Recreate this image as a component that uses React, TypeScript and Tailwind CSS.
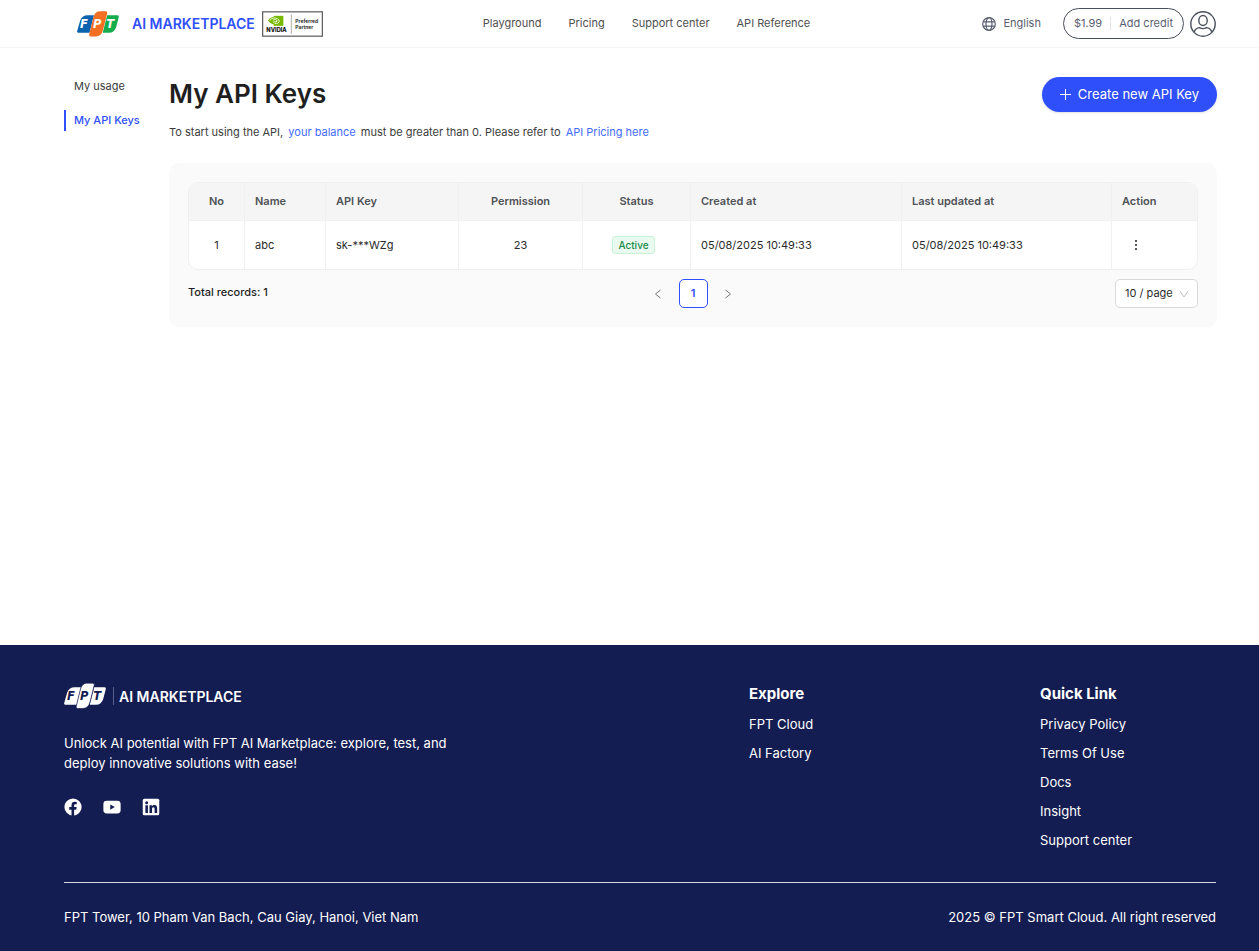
import React from 'react';

const navLinks = ['Playground', 'Pricing', 'Support center', 'API Reference'];
const exploreLinks = ['FPT Cloud', 'AI Factory'];
const quickLinks = ['Privacy Policy', 'Terms Of Use', 'Docs', 'Insight', 'Support center'];

const columns = [
  { title: 'No', width: 'w-[56px]', align: 'text-center' },
  { title: 'Name', width: 'w-[81px]', align: 'text-left' },
  { title: 'API Key', width: 'w-[133px]', align: 'text-left' },
  { title: 'Permission', width: 'w-[124px]', align: 'text-center' },
  { title: 'Status', width: 'w-[108px]', align: 'text-center' },
  { title: 'Created at', width: 'w-[211px]', align: 'text-left' },
  { title: 'Last updated at', width: 'w-[210px]', align: 'text-left' },
  { title: 'Action', width: 'w-[86px]', align: 'text-left' },
];

function FptLogo({ mono = false }: { mono?: boolean }) {
  const colors = mono ? ['#fff', '#fff', '#fff'] : ['#0b62ae', '#f36f21', '#14ad4e'];
  const ink = mono ? '#141d52' : '#fff';
  return (
    <svg viewBox="0 0 124 76" className="h-[26px] w-[42px]" role="img" aria-label="FPT">
      <path d="M32 12H50L37 64H4Q-1 64 1 57L9 29Q14 12 32 12Z" fill={colors[0]} />
      <path d="M89 12H119Q125 12 123 19L116 46Q111 64 94 64H76Z" fill={colors[2]} />
      <path
        d="M66 0H85Q91 0 89 7L77 55Q72 75 55 75H40Q35 75 36 69L48 20Q53 0 66 0Z"
        fill={colors[1]}
        stroke={mono ? '#141d52' : 'none'}
        strokeWidth="2"
      />
      <g fill={ink} fontFamily="'DejaVu Sans', sans-serif" fontWeight="700" fontStyle="italic" fontSize="34">
        <text x="9" y="51">F</text>
        <text x="47" y="51">P</text>
        <text x="86" y="51">T</text>
      </g>
    </svg>
  );
}

function NvidiaBadge() {
  return (
    <svg viewBox="0 0 183 77" className="h-[26px] w-[61px]" role="img" aria-label="NVIDIA Preferred Partner">
      <rect x="2" y="2" width="179" height="73" fill="#fff" stroke="#555" strokeWidth="3.5" />
      <rect x="35" y="14" width="29" height="30" fill="#76b900" />
      <path d="M18 28Q26 17 38 17V40Q24 38 18 28Z" fill="#76b900" />
      <path d="M23 28Q33 16 47 23Q57 30 47 36Q37 40 33 31" fill="none" stroke="#fff" strokeWidth="2.5" />
      <path d="M33 27Q40 22 46 29Q42 35 37 31" fill="none" stroke="#fff" strokeWidth="2.5" />
      <path d="M88 10V68" stroke="#888" strokeWidth="2" />
      <g fill="#111" fontFamily="Inter, sans-serif">
        <text x="13" y="63" fontSize="17" fontWeight="800">NVIDIA</text>
        <text x="100" y="37" fontSize="15" fontWeight="600">Preferred</text>
        <text x="100" y="53" fontSize="15" fontWeight="600">Partner</text>
      </g>
    </svg>
  );
}

function Globe() {
  return (
    <svg viewBox="0 0 14 14" className="size-[14px]" fill="none" stroke="currentColor" strokeWidth="1.2" aria-hidden="true">
      <circle cx="7" cy="7" r="6.3" />
      <ellipse cx="7" cy="7" rx="3" ry="6.3" />
      <path d="M1.2 4.8H12.8M1.2 9.2H12.8" />
    </svg>
  );
}

function Avatar() {
  return (
    <svg viewBox="0 0 26 26" className="size-[26px]" fill="none" stroke="#4a4f5c" strokeWidth="1.4" aria-hidden="true">
      <circle cx="13" cy="13" r="12.2" />
      <ellipse cx="13" cy="9.5" rx="4.2" ry="5" />
      <path d="M4 21.5Q5.5 16.8 9.5 16.6Q13 18.6 16.5 16.6Q20.5 16.8 22 21.5" />
    </svg>
  );
}

function Header() {
  return (
    <header className="grid h-12 grid-cols-[1fr_auto_1fr] items-center border-b border-[#f5f5f5] pr-[43px] pl-[77px]">
      <a href="#" className="flex items-center">
        <FptLogo />
        <span className="ml-[13px] text-[14px] font-semibold text-[#2f4ffb]">AI MARKETPLACE</span>
        <span className="ml-[7px]">
          <NvidiaBadge />
        </span>
      </a>
      <nav className="flex gap-[27px] text-[11px] text-[#4f4f4f]">
        {navLinks.map((label) => (
          <a key={label} href="#">
            {label}
          </a>
        ))}
      </nav>
      <div className="flex items-center justify-end text-[11px] text-[#5b6070]">
        <button type="button" className="flex items-center gap-[7px]">
          <Globe />
          English
        </button>
        <div className="ml-[22px] flex h-[31px] items-center rounded-full border border-[#4a4f5c] px-[10px]">
          <span>$1.99</span>
          <span className="mx-2 h-[13px] w-px bg-[#e5e5e5]" />
          <a href="#">Add credit</a>
        </div>
        <button type="button" aria-label="Account" className="ml-[6px]">
          <Avatar />
        </button>
      </div>
    </header>
  );
}

function Sidebar() {
  return (
    <nav className="flex w-[105px] shrink-0 flex-col gap-[13px] pt-[28px] text-[11px] leading-[21px]">
      <a href="#" className="border-l-2 border-transparent pl-2 text-[#3c3c3c]">
        My usage
      </a>
      <a href="#" aria-current="page" className="border-l-2 border-[#2f4ffb] pl-2 font-medium text-[#2f4ffb]">
        My API Keys
      </a>
    </nav>
  );
}

function KeysTable() {
  const cell = 'h-[48px] border-r border-[#f0f0f0] px-[10px] last:border-r-0';
  return (
    <div className="overflow-hidden rounded-[10px] border border-[#f0f0f0] bg-white">
      <table className="w-full table-fixed border-separate border-spacing-0 text-[11px] text-[#2b2b2b]">
        <thead className="bg-[#f5f5f5] text-[#4f5256]">
          <tr>
            {columns.map((c) => (
              <th
                key={c.title}
                scope="col"
                className={`${c.width} ${c.align} h-[38px] border-r border-b border-[#f0f0f0] px-[10px] font-semibold last:border-r-0`}
              >
                {c.title}
              </th>
            ))}
          </tr>
        </thead>
        <tbody>
          <tr>
            <td className={`${cell} text-center`}>1</td>
            <td className={cell}>abc</td>
            <td className={cell}>sk-***WZg</td>
            <td className={`${cell} text-center`}>23</td>
            <td className={`${cell} text-center`}>
              <span className="mr-[6px] inline-block rounded-[3px] border border-[#c9f2d6] bg-[#ebfaf0] px-[5px] text-[10px] leading-[16px] font-medium text-[#1a8a4a]">
                Active
              </span>
            </td>
            <td className={cell}>05/08/2025 10:49:33</td>
            <td className={cell}>05/08/2025 10:49:33</td>
            <td className={cell}>
              <button type="button" aria-label="More actions" className="flex h-6 w-7 items-center justify-center">
                <svg viewBox="0 0 4 12" className="h-3 w-1" fill="#222" aria-hidden="true">
                  <circle cx="2" cy="2" r="1" />
                  <circle cx="2" cy="6" r="1" />
                  <circle cx="2" cy="10" r="1" />
                </svg>
              </button>
            </td>
          </tr>
        </tbody>
      </table>
    </div>
  );
}

function Pager() {
  return (
    <div className="mt-[9px] grid grid-cols-[1fr_auto_1fr] text-[11px] text-[#1f1f1f]">
      <p className="leading-[26px] font-medium">Total records: 1</p>
      <div className="flex gap-[6px]">
        <button type="button" aria-label="Previous page" className="flex size-[29px] items-center justify-center text-[#777]">
          <svg viewBox="0 0 8 10" className="h-[10px] w-2" fill="none" stroke="currentColor" aria-hidden="true">
            <path d="M6.5 1L1.5 5L6.5 9" />
          </svg>
        </button>
        <button type="button" aria-current="page" className="size-[29px] rounded-[5px] border border-[#2f4ffb] bg-white font-semibold text-[#2f4ffb]">
          1
        </button>
        <button type="button" aria-label="Next page" className="flex size-[29px] items-center justify-center text-[#777]">
          <svg viewBox="0 0 8 10" className="h-[10px] w-2" fill="none" stroke="currentColor" aria-hidden="true">
            <path d="M1.5 1L6.5 5L1.5 9" />
          </svg>
        </button>
      </div>
      <div className="relative justify-self-end">
        <select
          aria-label="Rows per page"
          className="h-[29px] w-[83px] appearance-none rounded-[5px] border border-[#d9d9d9] bg-white pl-[9px] text-[11px] text-[#2b2b2b]"
        >
          <option>10 / page</option>
          <option>20 / page</option>
          <option>50 / page</option>
        </select>
        <svg
          viewBox="0 0 10 8"
          className="pointer-events-none absolute top-[11px] right-[9px] h-2 w-[10px]"
          fill="none"
          stroke="#bfbfbf"
          aria-hidden="true"
        >
          <path d="M1 1L5 7L9 1" />
        </svg>
      </div>
    </div>
  );
}

function FooterColumn({ title, links }: { title: string; links: string[] }) {
  return (
    <div>
      <h2 className="text-[15px] leading-[20px] font-bold">{title}</h2>
      <ul className="mt-[10px] flex flex-col gap-[9px] leading-[20px]">
        {links.map((l) => (
          <li key={l}>
            <a href="#">{l}</a>
          </li>
        ))}
      </ul>
    </div>
  );
}

function Footer() {
  return (
    <footer className="bg-[#141d52] pr-[43px] pl-16 text-[13px] text-white">
      <div className="grid grid-cols-[685fr_291fr_176fr] pt-[39px] pb-8">
        <div>
          <a href="#" className="flex h-6 items-center">
            <FptLogo mono />
            <span className="mr-[5px] ml-[7px] h-[18px] w-px bg-[#5a6189]" />
            <span className="text-[14px] font-semibold">AI MARKETPLACE</span>
          </a>
          <p className="mt-[25px] max-w-[400px] leading-[20px]">
            Unlock AI potential with FPT AI Marketplace: explore, test, and deploy innovative solutions with ease!
          </p>
          <div className="mt-[25px] flex gap-[21px]">
            <a href="#" aria-label="Facebook">
              <svg viewBox="0 0 24 24" className="size-[18px]" aria-hidden="true">
                <circle cx="12" cy="12" r="11.5" fill="#fff" />
                <path d="M10 24V15.5H7V12H10V9.5C10 6.5 11.7 5 14.5 5L17 5.2V8.2H15.3C14 8.2 13.5 8.9 13.5 10V12H16.9L16.3 15.5H13.5V24Z" fill="#141d52" />
              </svg>
            </a>
            <a href="#" aria-label="YouTube">
              <svg viewBox="0 0 24 24" className="size-[18px]" aria-hidden="true">
                <rect x="0.5" y="3.5" width="23" height="17" rx="4.5" fill="#fff" />
                <path d="M9.7 8.5V15.5L15.7 12Z" fill="#141d52" />
              </svg>
            </a>
            <a href="#" aria-label="LinkedIn">
              <svg viewBox="0 0 24 24" className="size-[18px]" aria-hidden="true">
                <rect x="1" y="1" width="22" height="22" rx="2" fill="#fff" />
                <circle cx="6.2" cy="6.2" r="2" fill="#141d52" />
                <path d="M4.5 9.5H7.9V20H4.5ZM10 9.5H13.2V11C13.8 10 15 9.2 16.5 9.2C19.5 9.2 20.2 11.2 20.2 14V20H16.8V14.6C16.8 13.2 16.6 12.2 15.3 12.2C13.9 12.2 13.4 13.2 13.4 14.6V20H10Z" fill="#141d52" />
              </svg>
            </a>
          </div>
        </div>
        <FooterColumn title="Explore" links={exploreLinks} />
        <FooterColumn title="Quick Link" links={quickLinks} />
      </div>
      <div className="flex justify-between border-t border-[#d5d7e2] py-6 leading-[20px]">
        <p>FPT Tower, 10 Pham Van Bach, Cau Giay, Hanoi, Viet Nam</p>
        <p>2025 © FPT Smart Cloud. All right reserved</p>
      </div>
    </footer>
  );
}

export default function App() {
  return (
    <div className="flex min-h-screen flex-col bg-white font-[Inter,sans-serif]">
      <Header />
      <div className="flex grow pr-[42px] pb-8 pl-16">
        <Sidebar />
        <main className="min-w-0 grow pt-[29px]">
          <div className="flex items-start justify-between">
            <h1 className="text-[26px] leading-[34px] font-semibold text-[#1f1f1f]">My API Keys</h1>
            <button
              type="button"
              className="flex h-[35px] items-center gap-[7px] rounded-full bg-[#2f4ffb] px-[18px] text-[13px] text-white shadow-sm"
            >
              <svg viewBox="0 0 11 11" className="size-[11px]" stroke="currentColor" aria-hidden="true">
                <path d="M5.5 0V11M0 5.5H11" />
              </svg>
              Create new API Key
            </button>
          </div>
          <p className="mt-[10px] text-[11px] leading-[20px] text-[#3c3c3c]">
            To start using the API,{' '}
            <a href="#" className="mx-[2px] text-[#3f6bff]">
              your balance
            </a>{' '}
            must be greater than 0. Please refer to{' '}
            <a href="#" className="mx-[2px] text-[#3f6bff]">
              API Pricing here
            </a>
          </p>
          <section className="mt-[21px] rounded-[10px] bg-[#fafafa] p-[19px]">
            <KeysTable />
            <Pager />
          </section>
        </main>
      </div>
      <Footer />
    </div>
  );
}
